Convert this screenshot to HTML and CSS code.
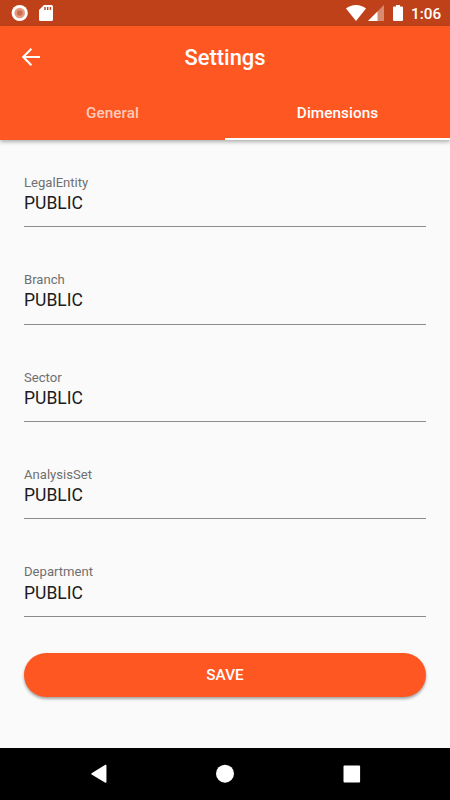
FILE: index.html
```html
<!DOCTYPE html>
<html lang="en">
<head>
    <meta charset="UTF-8">
    <meta name="viewport" content="width=device-width, initial-scale=1.0">
    <title>Settings</title>
    <link rel="stylesheet" href="styles.css">
</head>
<body>
    <div class="status-bar">
        <svg class="record-icon" width="18" height="18" viewBox="0 0 18 18">
            <circle cx="8.700" cy="9" r="8.1" fill="#fff"/>
            <circle cx="8.700" cy="9" r="5.3" fill="#e29a82"/>
            <circle cx="8.700" cy="9" r="2.8" fill="#d16a4b"/>
        </svg>
        <svg class="card-icon" width="14" height="16" viewBox="0 0 14 16">
            <path d="M5 0h7.5Q14 0 14 1.5v13q0 1.500-1.500 1.500h-11Q0 16 0 14.500V5z" fill="#fff"/>
            <path d="M6 2v3M8.700 2v3M11.400 2v3" stroke="#bf4119" stroke-width="1.400"/>
        </svg>
        <div class="status-right">
            <svg class="wifi-icon" width="20" height="16" viewBox="0 0 20 16">
                <path d="M0 3.600Q4.200 0 10 0t10 3.600L10 16z" fill="#fff"/>
            </svg>
            <svg class="signal-icon" width="16" height="16" viewBox="0 0 16 16">
                <path d="M0 16L16 0v16z" fill="#d78b71"/>
                <path d="M0 16L9.500 6.500V16z" fill="#fff"/>
            </svg>
            <svg class="battery-icon" width="10" height="16" viewBox="0 0 10 16">
                <path d="M3 0h4v1.600h2q1 0 1 1V15q0 1-1 1H1q-1 0-1-1V2.600q0-1 1-1h2z" fill="#fff"/>
            </svg>
            <span class="time">1:06</span>
        </div>
    </div>
    <header class="app-bar">
        <div class="title-row">
            <svg class="back-icon" width="18" height="18" viewBox="0 0 18 18">
                <path d="M18 9H1.500M9.400 .8L1.200 9l8.200 8.200" fill="none" stroke="#fff" stroke-width="2.100"/>
            </svg>
            <h1>Settings</h1>
        </div>
        <nav class="tabs">
            <div class="tab">General</div>
            <div class="tab active">Dimensions</div>
        </nav>
    </header>
    <main class="content">
        <div class="form-field">
            <label for="legal-entity">LegalEntity</label>
            <input type="text" id="legal-entity" value="PUBLIC">
        </div>
        <div class="form-field">
            <label for="branch">Branch</label>
            <input type="text" id="branch" value="PUBLIC">
        </div>
        <div class="form-field">
            <label for="sector">Sector</label>
            <input type="text" id="sector" value="PUBLIC">
        </div>
        <div class="form-field">
            <label for="analysis-set">AnalysisSet</label>
            <input type="text" id="analysis-set" value="PUBLIC">
        </div>
        <div class="form-field">
            <label for="department">Department</label>
            <input type="text" id="department" value="PUBLIC">
        </div>
        <button class="save" type="button">SAVE</button>
    </main>
    <footer class="nav-bar">
        <svg width="18" height="20" viewBox="0 0 18 20">
            <path d="M15.700 1.500v16.600L2 9.800z" fill="#fff" stroke="#fff" stroke-width="1.500" stroke-linejoin="round"/>
        </svg>
        <svg width="18" height="20" viewBox="0 0 18 20">
            <circle cx="9" cy="9.700" r="9" fill="#fff"/>
        </svg>
        <svg width="18" height="20" viewBox="0 0 18 20">
            <rect x=".5" y="1.400" width="16.600" height="17" rx="1" fill="#fff"/>
        </svg>
    </footer>
</body>
</html>
```
FILE: styles.css
```css
* {
    box-sizing: border-box;
}
body {
    display: flex;
    flex-direction: column;
    height: 800px;
    margin: 0;
    overflow: hidden;
    font-family: Roboto, sans-serif;
    background-color: #fafafa;
}
svg {
    display: block;
    flex-shrink: 0;
}
.status-bar {
    display: flex;
    align-items: center;
    height: 26px;
    padding: 0 9px 0 11px;
    background-color: #bf4119;
}
.card-icon {
    margin-left: 10px;
}
.status-right {
    display: flex;
    align-items: center;
    margin-left: auto;
}
.signal-icon {
    margin-left: 2px;
}
.battery-icon {
    margin-left: 9px;
}
.time {
    width: 30px;
    margin-left: 8px;
    padding-top: 1px;
    color: #fff;
    font-size: 15.3px;
    font-weight: 500;
    line-height: 26px;
    white-space: nowrap;
}
.app-bar {
    height: 113.6px;
    background-color: #ff5722;
    color: #fff;
    box-shadow: 0 2px 4px rgba(0, 0, 0, 0.3);
}
.title-row {
    display: grid;
    grid-template-columns: 22px 1fr 22px;
    align-items: center;
    height: 62px;
}
.back-icon {
    margin-left: 22px;
}
h1 {
    margin: 0;
    text-align: center;
    font-size: 21.9px;
    font-weight: 500;
}
.tabs {
    display: flex;
    height: 51.6px;
}
.tab {
    flex: 1;
    padding-top: 15px;
    text-align: center;
    font-size: 15.3px;
    font-weight: 500;
    line-height: 20px;
    letter-spacing: 0.05px;
    color: rgba(255, 255, 255, 0.7);
}
.tab.active {
    color: #fff;
    border-bottom: 2.2px solid #fff;
}
.content {
    flex: 1;
    padding: 34.3px 24px 0;
}
.form-field {
    height: 53.4px;
    margin-bottom: 44px;
    border-bottom: 1px solid #8c8c8c;
}
.form-field label {
    display: block;
    font-size: 13.1px;
    line-height: 18px;
    color: #6f6f6f;
}
.form-field input {
    display: block;
    width: 100%;
    height: 22.4px;
    padding: 0;
    border: none;
    outline: none;
    background: transparent;
    font-family: inherit;
    font-size: 17.5px;
    color: #1c1c1c;
}
.save {
    display: block;
    width: 100%;
    height: 44px;
    margin-top: -8px;
    border: none;
    border-radius: 22px;
    background-color: #ff5722;
    color: #fff;
    font-family: inherit;
    font-size: 15.3px;
    font-weight: 500;
    box-shadow: 0 2px 3px rgba(0, 0, 0, 0.35);
}
.nav-bar {
    display: flex;
    justify-content: center;
    align-items: center;
    gap: 108.5px;
    height: 52px;
    background-color: #000;
}
```
